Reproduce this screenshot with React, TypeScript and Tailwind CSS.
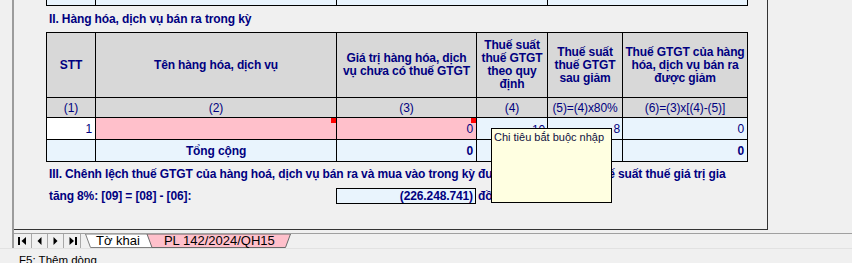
import React from "react";

const Cell = ({
  className = "",
  children,
}: {
  className?: string;
  children?: React.ReactNode;
}) => (
  <div className={`border-r border-b border-black flex items-center ${className}`}>
    {children}
  </div>
);

const Marker = () => (
  <span className="absolute top-0 right-0 w-[5px] h-[5px] bg-[#ff0000]" />
);

const head = "bg-[#d8d8d8] justify-center text-center font-bold leading-[13px]";
const idx = "bg-[#d8d8d8] justify-center";
const blue = "bg-[#e9f4fd]";
const pink = "bg-[#ffc0cb]";

const NavButton = ({ children, className = "" }: { children: React.ReactNode; className?: string }) => (
  <div className={`h-full flex items-center justify-center border-r border-[#a8a8a8] ${className}`}>
    {children}
  </div>
);

export default function App() {
  return (
    <div className="w-[852px] h-[263px] bg-[#f0f0f0] relative overflow-hidden font-['Liberation_Sans',Arial,sans-serif] text-[12px] text-[#000080] tracking-[-0.12px]">
      <div className="ml-[12px] h-[248px] border-l-2 border-[#9c9c9c] flex flex-col">
        {/* sheet area */}
        <div className="h-[233px]">
          <div className="w-[754px] h-[230px] border-r border-b border-[#333333]">
            <div className="ml-[32px]">
              {/* end of previous table */}
              <div className="h-[6px] grid grid-cols-[49px_241px_211px_200px] border-l border-black">
                <div className={`border-r border-b border-black ${blue}`} />
                <div className={`border-r border-b border-black ${blue}`} />
                <div className={`border-r border-b border-black ${blue}`} />
                <div className={`border-r border-b border-black ${blue}`} />
              </div>

              <div className="h-[26px] flex items-center pl-[3px] font-bold whitespace-nowrap">
                II. Hàng hóa, dịch vụ bán ra trong kỳ
              </div>

              <div className="w-[702px] grid grid-cols-[49px_241px_140px_71px_75px_125px] grid-rows-[65px_20px_22px_22px] border-l border-t border-black">
                <Cell className={head}>STT</Cell>
                <Cell className={head}>Tên hàng hóa, dịch vụ</Cell>
                <Cell className={head}>
                  Giá trị hàng hóa, dịch
                  <br />
                  vụ chưa có thuế GTGT
                </Cell>
                <Cell className={head}>
                  Thuế suất
                  <br />
                  thuế GTGT
                  <br />
                  theo quy
                  <br />
                  định
                </Cell>
                <Cell className={head}>
                  Thuế suất
                  <br />
                  thuế GTGT
                  <br />
                  sau giảm
                </Cell>
                <Cell className={head}>
                  Thuế GTGT của hàng
                  <br />
                  hóa, dịch vụ bán ra
                  <br />
                  được giảm
                </Cell>

                <Cell className={idx}>(1)</Cell>
                <Cell className={idx}>(2)</Cell>
                <Cell className={idx}>(3)</Cell>
                <Cell className={idx}>(4)</Cell>
                <Cell className={idx}>(5)=(4)x80%</Cell>
                <Cell className={idx}>(6)=(3)x[(4)-(5)]</Cell>

                <Cell className="bg-white justify-end pr-[3px]">1</Cell>
                <Cell className={`${pink} relative`}>
                  <Marker />
                </Cell>
                <Cell className={`${pink} relative justify-end pr-[3px]`}>
                  0
                  <Marker />
                </Cell>
                <Cell className={`${blue} justify-end pr-[2px] items-start pt-[3px]`}>10</Cell>
                <Cell className={`${blue} justify-end pr-[2px]`}>8</Cell>
                <Cell className={`${blue} justify-end pr-[3px]`}>0</Cell>

                <Cell className={blue} />
                <Cell className={`${blue} justify-center font-bold`}>Tổng cộng</Cell>
                <Cell className={`${blue} justify-end pr-[3px] font-bold`}>0</Cell>
                <Cell className={blue} />
                <Cell className={blue} />
                <Cell className={`${blue} justify-end pr-[3px] font-bold`}>0</Cell>
              </div>

              <div className="h-[24px] flex items-center pl-[3px] font-bold whitespace-nowrap">
                III. Chênh lệch thuế GTGT của hàng hoá, dịch vụ bán ra và mua vào trong kỳ được áp dụng mức thuế suất thuế giá trị gia
              </div>
              <div className="flex items-center mt-[1px] font-bold whitespace-nowrap">
                <div className="w-[290px] pl-[3px]">tăng 8%: [09] = [08] - [06]:</div>
                <div className={`w-[140px] h-[16px] border border-black ${blue} flex items-center justify-end pr-[2px]`}>
                  (226.248.741)
                </div>
                <span className="ml-[2px]">đồng</span>
              </div>
            </div>
          </div>
        </div>

        {/* sheet tabs */}
        <div className="h-[15px] border-t border-[#a0a0a0] flex text-black tracking-normal">
          <NavButton className="w-[18px]">
            <svg width="9" height="8" viewBox="0 0 9 8">
              <rect x="0" y="0" width="2" height="8" fill="#000" />
              <polygon points="8,0 8,8 3.5,4" fill="#000" />
            </svg>
          </NavButton>
          <NavButton className="w-[16px]">
            <svg width="5" height="8" viewBox="0 0 5 8">
              <polygon points="4.5,0 4.5,8 0.5,4" fill="#000" />
            </svg>
          </NavButton>
          <NavButton className="w-[16px]">
            <svg width="5" height="8" viewBox="0 0 5 8">
              <polygon points="0.5,0 0.5,8 4.5,4" fill="#000" />
            </svg>
          </NavButton>
          <NavButton className="w-[17px] pl-[3px]">
            <svg width="9" height="8" viewBox="0 0 9 8">
              <polygon points="0.5,0 0.5,8 5,4" fill="#000" />
              <rect x="6" y="0" width="2" height="8" fill="#000" />
            </svg>
          </NavButton>
          <div className="relative w-[215px] h-full text-[13px] leading-[14px] whitespace-nowrap flex">
            <svg className="absolute inset-0" width="215" height="14" viewBox="0 0 215 14">
              <polygon points="4.5,0 76,0 71,13.5 9.5,13.5" fill="#ffffff" stroke="#808080" strokeWidth="1" />
              <polygon points="66,0 209.5,0 204.5,13.5 71,13.5" fill="#ffc0cb" stroke="#6a6a6a" strokeWidth="1" />
            </svg>
            <span className="relative ml-[15px]">Tờ khai</span>
            <span className="relative ml-[24px]">PL 142/2024/QH15</span>
          </div>
        </div>
      </div>
      <div className="h-[1px] bg-[#e2e2e2]" />
      <div className="pt-[4px] pl-[19px] text-[11.5px] leading-[14px] text-black tracking-normal whitespace-nowrap">
        F5: Thêm dòng
      </div>

      {/* tooltip */}
      <div className="absolute left-[491px] top-[128px] w-[121px] h-[75px] border border-black bg-[#ffffe1] pl-[2px] pt-[1px] text-[11px] leading-[14px] text-[#101040] tracking-normal whitespace-nowrap">
        Chi tiêu bắt buộc nhập
      </div>
    </div>
  );
}
